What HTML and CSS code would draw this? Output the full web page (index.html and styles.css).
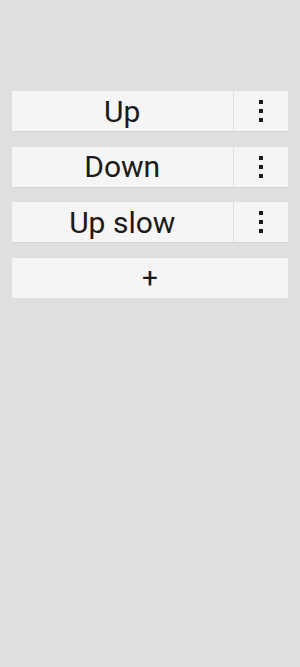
FILE: index.html
```html
<!DOCTYPE html>
<html>
<head>
<meta charset="UTF-8">
<title>Buttons</title>
<link rel="stylesheet" href="styles.css">
</head>
<body>
	<div class="list">
		<div class="row">
			<div class="btn main">Up</div>
			<div class="btn menu"><svg width="4" height="22" viewBox="0 0 4 22"><rect x="0" y="0" width="4" height="4"/><rect x="0" y="9" width="4" height="4"/><rect x="0" y="18" width="4" height="4"/></svg></div>
		</div>
		<div class="row">
			<div class="btn main">Down</div>
			<div class="btn menu"><svg width="4" height="22" viewBox="0 0 4 22"><rect x="0" y="0" width="4" height="4"/><rect x="0" y="9" width="4" height="4"/><rect x="0" y="18" width="4" height="4"/></svg></div>
		</div>
		<div class="row">
			<div class="btn main">Up slow</div>
			<div class="btn menu"><svg width="4" height="22" viewBox="0 0 4 22"><rect x="0" y="0" width="4" height="4"/><rect x="0" y="9" width="4" height="4"/><rect x="0" y="18" width="4" height="4"/></svg></div>
		</div>
		<div class="row">
			<div class="btn add">+</div>
		</div>
	</div>
</body>
</html>
```

FILE: styles.css
```css
body{
	margin:0;
	padding:0;
	background:#dfdfdf;
	font-family:Roboto, "Liberation Sans", sans-serif;
}
.list{
	display:flex;
	flex-direction:column;
	gap:15.6px;
	padding:91px 12px 0 12px;
}
.row{
	display:flex;
	gap:1.5px;
	height:40px;
}
.btn{
	background:#f5f5f5;
	color:#1a1a1a;
	display:flex;
	align-items:center;
	justify-content:center;
	font-size:30px;
	box-shadow:0 1px 0 #d4d4d4;
}
.main{
	flex:1;
}
.menu{
	width:54px;
}
.menu svg{
	fill:#1a1a1a;
}
.add{
	flex:1;
	font-size:28px;
}
```
